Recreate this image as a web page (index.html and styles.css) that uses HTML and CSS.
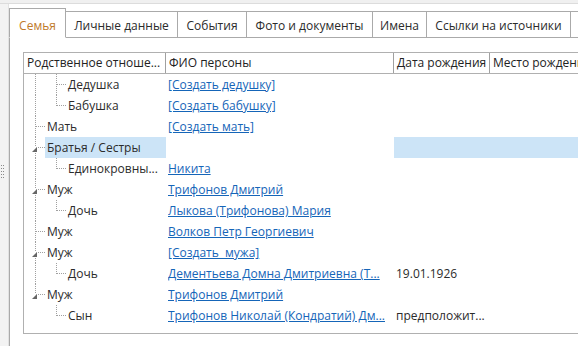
FILE: index.html
```html
<!DOCTYPE html>
<html lang="ru">
<head>
    <meta charset="UTF-8">
    <title>Семья</title>
    <link rel="stylesheet" href="styles.css">
</head>
<body>
    <div class="top-band"></div>
    <div class="workspace">
        <!-- splitter on the left -->
        <div class="side">
            <svg class="grip" width="4" height="14" viewBox="0 0 4 14">
                <g fill="#8a8a8a">
                    <rect x="0" y="0" width="1" height="1"/><rect x="2" y="0" width="1" height="1"/>
                    <rect x="0" y="3" width="1" height="1"/><rect x="2" y="3" width="1" height="1"/>
                    <rect x="0" y="6" width="1" height="1"/><rect x="2" y="6" width="1" height="1"/>
                    <rect x="0" y="9" width="1" height="1"/><rect x="2" y="9" width="1" height="1"/>
                    <rect x="0" y="12" width="1" height="1"/><rect x="2" y="12" width="1" height="1"/>
                </g>
            </svg>
        </div>

        <div class="pages">
            <div class="tabbar">
                <div class="tab tab-active tab-family">Семья</div>
                <div class="tab tab-personal">Личные данные</div>
                <div class="tab tab-events">События</div>
                <div class="tab tab-media">Фото и документы</div>
                <div class="tab tab-names">Имена</div>
                <div class="tab tab-sources">Ссылки на источники</div>
                <div class="tab tab-stub"></div>
            </div>

            <div class="page">
                <div class="grid">
                    <div class="row head">
                        <div class="hcell">Родственное отноше...</div>
                        <div class="hcell">ФИО персоны</div>
                        <div class="hcell">Дата рождения</div>
                        <div class="hcell">Место рождения</div>
                    </div>

                    <div class="rows">
                        <div class="row">
                            <div class="cell tree"><span class="g g-pipe"></span><span class="g g-tee"></span><span class="label">Дедушка</span></div>
                            <div class="cell"><a href="#">[Создать дедушку]</a></div>
                            <div class="cell"></div>
                            <div class="cell"></div>
                        </div>
                        <div class="row">
                            <div class="cell tree"><span class="g g-pipe"></span><span class="g g-elbow"></span><span class="label">Бабушка</span></div>
                            <div class="cell"><a href="#">[Создать бабушку]</a></div>
                            <div class="cell"></div>
                            <div class="cell"></div>
                        </div>
                        <div class="row">
                            <div class="cell tree"><span class="g g-tee"></span><span class="label">Мать</span></div>
                            <div class="cell"><a href="#">[Создать мать]</a></div>
                            <div class="cell"></div>
                            <div class="cell"></div>
                        </div>
                        <div class="row row-sel">
                            <div class="cell tree"><span class="g g-tee"><i class="expander"></i></span><span class="label">Братья / Сестры</span></div>
                            <div class="cell"></div>
                            <div class="cell"></div>
                            <div class="cell"></div>
                        </div>
                        <div class="row">
                            <div class="cell tree"><span class="g g-pipe"></span><span class="g g-elbow"></span><span class="label">Единокровны...</span></div>
                            <div class="cell"><a href="#">Никита</a></div>
                            <div class="cell"></div>
                            <div class="cell"></div>
                        </div>
                        <div class="row">
                            <div class="cell tree"><span class="g g-tee"><i class="expander"></i></span><span class="label">Муж</span></div>
                            <div class="cell"><a href="#">Трифонов Дмитрий</a></div>
                            <div class="cell"></div>
                            <div class="cell"></div>
                        </div>
                        <div class="row">
                            <div class="cell tree"><span class="g g-pipe"></span><span class="g g-elbow"></span><span class="label">Дочь</span></div>
                            <div class="cell"><a href="#">Лыкова (Трифонова) Мария</a></div>
                            <div class="cell"></div>
                            <div class="cell"></div>
                        </div>
                        <div class="row">
                            <div class="cell tree"><span class="g g-tee"></span><span class="label">Муж</span></div>
                            <div class="cell"><a href="#">Волков Петр Георгиевич</a></div>
                            <div class="cell"></div>
                            <div class="cell"></div>
                        </div>
                        <div class="row">
                            <div class="cell tree"><span class="g g-tee"><i class="expander"></i></span><span class="label">Муж</span></div>
                            <div class="cell"><a href="#">[Создать&nbsp; мужа]</a></div>
                            <div class="cell"></div>
                            <div class="cell"></div>
                        </div>
                        <div class="row">
                            <div class="cell tree"><span class="g g-pipe"></span><span class="g g-elbow"></span><span class="label">Дочь</span></div>
                            <div class="cell"><a href="#">Дементьева Домна Дмитриевна (Т...</a></div>
                            <div class="cell">19.01.1926</div>
                            <div class="cell"></div>
                        </div>
                        <div class="row">
                            <div class="cell tree"><span class="g g-elbow"><i class="expander"></i></span><span class="label">Муж</span></div>
                            <div class="cell"><a href="#">Трифонов Дмитрий</a></div>
                            <div class="cell"></div>
                            <div class="cell"></div>
                        </div>
                        <div class="row">
                            <div class="cell tree"><span class="g"></span><span class="g g-elbow"></span><span class="label">Сын</span></div>
                            <div class="cell"><a href="#">Трифонов Николай (Кондратий) Дм...</a></div>
                            <div class="cell">предположит...</div>
                            <div class="cell"></div>
                        </div>
                    </div>
                </div>
            </div>
        </div>
    </div>
</body>
</html>
```

FILE: styles.css
```css
body {
    margin: 0;
    width: 578px;
    height: 346px;
    overflow: hidden;
    background-color: #ffffff;
    font-family: "Open Sans", "Noto Sans", sans-serif;
    font-size: 12px;
    color: #2b2b2b;
}
.top-band {
    height: 3px;
    background-color: #f0f0f0;
    border-bottom: 1px solid #dcdcdc;
}
.workspace {
    display: flex;
    height: 342px;
}
.side {
    flex: 0 0 9px;
    background-color: #f3f3f3;
    border-right: 1px solid #e2e2e2;
    display: flex;
    align-items: center;
    padding-left: 1px;
    box-sizing: border-box;
}
.grip {
    display: block;
    margin-top: -6px;
}
.pages {
    flex: 1;
    min-width: 0;
    display: flex;
    flex-direction: column;
}

/* tabs */
.tabbar {
    display: flex;
    align-items: flex-end;
    padding-top: 4px;
    height: 29px;
    border-bottom: 1px solid #aaaaaa;
}
.tab {
    flex-shrink: 0;
    box-sizing: border-box;
    height: 26px;
    line-height: 23px;
    padding-top: 2px;
    border-top: 1px solid #aaaaaa;
    border-right: 1px solid #aaaaaa;
    text-align: center;
    white-space: nowrap;
    color: #2b2b2b;
}
.tab-active {
    height: 30px;
    padding-top: 5px;
    border-left: 1px solid #aaaaaa;
    border-bottom: 1px solid #ffffff;
    margin-bottom: -1px;
    color: #c07a2a;
}
.tab-family { width: 57px; }
.tab-personal { width: 112px; }
.tab-events { width: 69px; }
.tab-media { width: 126px; }
.tab-names { width: 54px; }
.tab-sources { width: 144px; }
.tab-stub { width: 20px; }

/* page with the grid */
.page {
    flex: 1;
    border-left: 1px solid #aaaaaa;
    padding: 14px 0 0 13px;
    overflow: hidden;
}
.grid {
    width: 600px;
    border-top: 1px solid #b0b0b0;
    border-left: 1px solid #b0b0b0;
    border-bottom: 1px solid #b0b0b0;
}
.row {
    display: grid;
    grid-template-columns: 142px 228px 96px 134px;
    height: 21px;
}
.head {
    height: 20px;
    border-bottom: 1px solid #b0b0b0;
}
.hcell {
    padding-left: 3px;
    line-height: 20px;
    border-right: 1px solid #a0a0a0;
    white-space: nowrap;
    overflow: hidden;
    color: #222222;
}
.rows {
    height: 259px;
}
.cell {
    padding-left: 2px;
    line-height: 21px;
    white-space: nowrap;
    overflow: hidden;
}
.cell a {
    display: block;
    overflow: hidden;
    text-overflow: ellipsis;
    color: #1565b8;
    text-decoration: underline;
}

/* tree lines */
.tree {
    display: flex;
    padding-left: 0;
}
.g {
    flex: 0 0 21px;
    position: relative;
}
.g-pipe::before,
.g-tee::before,
.g-elbow::before {
    content: "";
    position: absolute;
    left: 11px;
    top: 0;
    bottom: 0;
    border-left: 1px dotted #a0a0a0;
}
.g-elbow::before {
    bottom: 50%;
}
.g-tee::after,
.g-elbow::after {
    content: "";
    position: absolute;
    left: 12px;
    right: 0;
    top: 10px;
    border-top: 1px dotted #a0a0a0;
}
.expander {
    position: absolute;
    left: 8px;
    top: 10px;
    width: 0;
    height: 0;
    border-left: 5px solid transparent;
    border-bottom: 5px solid #666666;
    background-color: #ffffff;
}
.label {
    flex: 1;
    padding-left: 2px;
    overflow: hidden;
    text-overflow: ellipsis;
}
.row-sel .label,
.row-sel .cell:nth-child(3),
.row-sel .cell:nth-child(4) {
    background-color: #cce4f7;
}
```
